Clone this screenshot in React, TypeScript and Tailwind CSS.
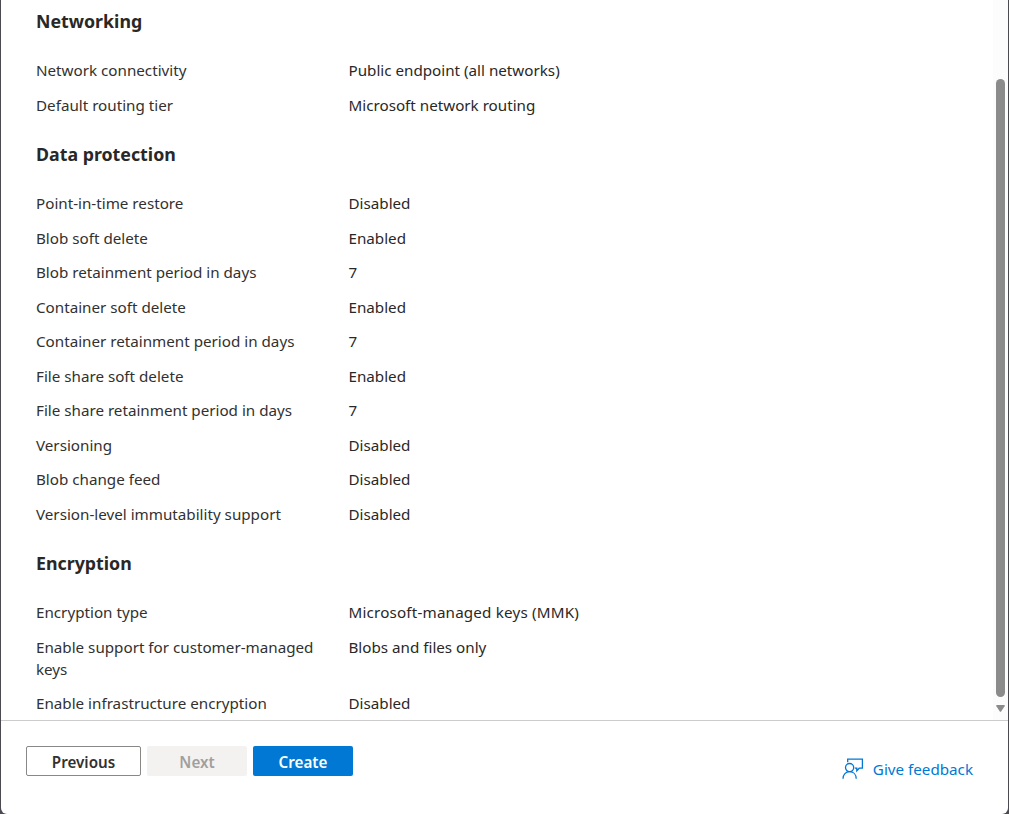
type Row = { label: string; value: string };
type Section = { title: string; rows: Row[] };

const sections: Section[] = [
  {
    title: "Networking",
    rows: [
      { label: "Network connectivity", value: "Public endpoint (all networks)" },
      { label: "Default routing tier", value: "Microsoft network routing" },
    ],
  },
  {
    title: "Data protection",
    rows: [
      { label: "Point-in-time restore", value: "Disabled" },
      { label: "Blob soft delete", value: "Enabled" },
      { label: "Blob retainment period in days", value: "7" },
      { label: "Container soft delete", value: "Enabled" },
      { label: "Container retainment period in days", value: "7" },
      { label: "File share soft delete", value: "Enabled" },
      { label: "File share retainment period in days", value: "7" },
      { label: "Versioning", value: "Disabled" },
      { label: "Blob change feed", value: "Disabled" },
      { label: "Version-level immutability support", value: "Disabled" },
    ],
  },
  {
    title: "Encryption",
    rows: [
      { label: "Encryption type", value: "Microsoft-managed keys (MMK)" },
      { label: "Enable support for customer-managed keys", value: "Blobs and files only" },
      { label: "Enable infrastructure encryption", value: "Disabled" },
    ],
  },
];

function FeedbackIcon() {
  return (
    <svg width="22" height="22" viewBox="0 0 22 22" fill="none" stroke="#0078d4" strokeWidth="1.3">
      <path d="M5.7 4.3V1.1H20.4V10.2H17.2L14.8 12.9V10.2H12.8" />
      <circle cx="7.6" cy="9.6" r="4.1" />
      <path d="M1 20.8C1 16.5 3.8 13.7 7.6 13.7S14.2 16.5 14.2 20.8" />
    </svg>
  );
}

function SummarySection({ title, rows }: Section) {
  return (
    <section>
      <h2 className="flex h-[64px] items-center text-[17.8px] font-bold text-[#292827]">{title}</h2>
      <dl>
        {rows.map((row) => (
          <div key={row.label} className="flex py-[6.25px] leading-[22px]">
            <dt className="w-[312.5px] shrink-0 pr-5 text-[#323130]">{row.label}</dt>
            <dd className={row.value.endsWith("(MMK)") ? "tracking-[0.18px]" : ""}>{row.value}</dd>
          </div>
        ))}
      </dl>
    </section>
  );
}

export default function App() {
  return (
    <div className="h-[814px] w-[1009px] overflow-hidden bg-[#4b4a50] pr-px pl-px font-['Noto_Sans','Open_Sans',sans-serif] text-[15.2px] text-[#292827]">
      <div className="flex h-full flex-col overflow-hidden rounded-b-[6px] bg-white">
        <main className="flex h-[720px] shrink-0 overflow-hidden">
          <div className="-mt-[11px] flex-1 pl-[35px]">
            {sections.map((section) => (
              <SummarySection key={section.title} {...section} />
            ))}
          </div>
          <div className="flex w-[15px] flex-col items-center bg-[#fcfcfc] pt-[79px]">
            <div className="h-[618px] w-[9px] shrink-0 rounded-full bg-[#8b8b8b]" />
            <svg className="mt-2 shrink-0" width="9" height="7" viewBox="0 0 9 7" fill="#8b8b8b">
              <path d="M1 0H8Q9.3 0 8.6 1.2L5.3 6.2Q4.5 7.3 3.7 6.2L.4 1.2Q-.3 0 1 0Z" />
            </svg>
          </div>
        </main>
        <footer className="flex flex-1 items-start border-t border-[#cccccc] pt-[25px] pr-[35px] pl-[25px] font-semibold">
          <div className="flex gap-1.5">
            <button className="h-[30px] w-[115px] rounded-[2px] border border-[#8a8886] pt-0.5 text-[#323130]">Previous</button>
            <button className="h-[30px] w-[100px] rounded-[2px] bg-[#f3f2f1] pt-0.5 text-[#a19f9d]" disabled>Next</button>
            <button className="h-[30px] w-[100px] rounded-[2px] bg-[#0078d4] pt-0.5 text-white">Create</button>
          </div>
          <a className="mt-[12px] ml-auto flex items-center gap-[9px] font-normal text-[#0078d4]">
            <FeedbackIcon />
            <span>Give feedback</span>
          </a>
        </footer>
      </div>
    </div>
  );
}
